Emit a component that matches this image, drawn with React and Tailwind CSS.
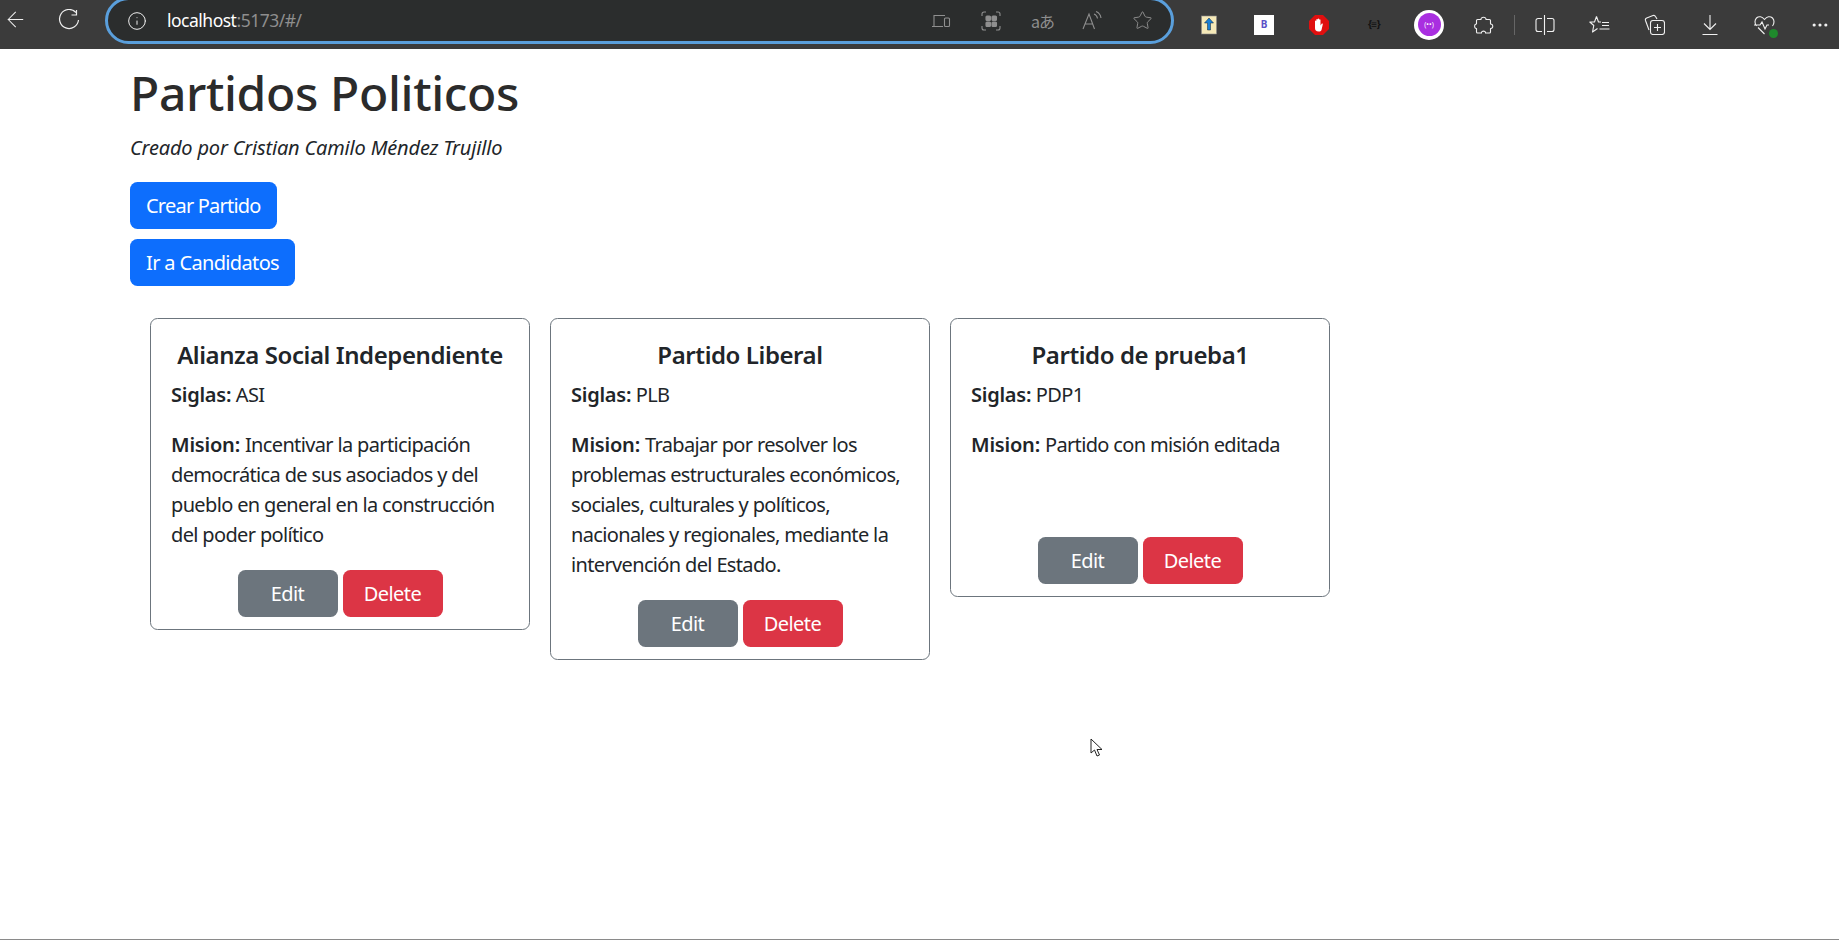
import { ArrowLeft, Info, Star, MoreHorizontal } from 'lucide-react'

const PARTIES = [
    {
        name: 'Alianza Social Independiente',
        siglas: 'ASI',
        lines: ['Incentivar la participación', 'democrática de sus asociados y del', 'pueblo en general en la construcción', 'del poder político'],
    },
    {
        name: 'Partido Liberal',
        siglas: 'PLB',
        lines: ['Trabajar por resolver los', 'problemas estructurales económicos,', 'sociales, culturales y políticos,', 'nacionales y regionales, mediante la', 'intervención del Estado.'],
    },
    {
        name: 'Partido de prueba1',
        siglas: 'PDP1',
        lines: ['Partido con misión editada'],
    },
]

function Slot({ children }) {
    return <div className="w-[55px] h-[49px] flex items-center justify-center shrink-0">{children}</div>
}

function Toolbar() {
    return (
        <div className="h-[49px] bg-[#3b3b3b] flex items-start shrink-0 overflow-hidden text-white">
            <div className="w-[30px] h-[39px] flex items-center justify-center shrink-0">
                <ArrowLeft size={25} strokeWidth={1} color="#f0f0f0" />
            </div>
            <div className="w-[30px] h-[39px] ml-[24px] flex items-center justify-center shrink-0">
                <svg width="22" height="22" viewBox="0 0 22 22" fill="none" stroke="#f0f0f0" strokeWidth="1.2">
                    <path d="M18 3.500A9.500 9.500 0 1 0 20.500 11" />
                    <path d="M18.500 1v5h-5" />
                </svg>
            </div>
            <div className="ml-[21px] w-[1069px] h-[47px] -mt-[3px] bg-[#2b2d2d] border-[3px] border-[#5a9fdc] rounded-[24px] flex items-center shrink-0">
                <div className="w-[20px] ml-[19px] flex justify-center shrink-0">
                    <Info size={20} strokeWidth={1.2} color="#eeeeee" />
                </div>
                <span className="ml-[20px] text-[17.5px] tracking-[-0.5px] text-white">
                    localhost<span className="text-[#8e8e8e]">:5173/#/</span>
                </span>
                <div className="ml-auto flex items-center gap-[30px] pr-[18px] text-[#8f8f8f]">
                    <svg width="20" height="20" viewBox="0 0 20 20" fill="none" stroke="currentColor" strokeWidth="1.1">
                        <path d="M3 15V4.500h11M1 15.500h11" />
                        <rect x="13.500" y="7" width="5" height="8.500" rx="1" />
                    </svg>
                    <svg width="20" height="20" viewBox="0 0 20 20" fill="none" stroke="currentColor" strokeWidth="1.1">
                        <path d="M1 5V3a2 2 0 0 1 2-2h2M15 1h2a2 2 0 0 1 2 2v2M19 15v2a2 2 0 0 1-2 2h-2M5 19H3a2 2 0 0 1-2-2v-2" />
                        <rect x="5" y="5" width="4.500" height="4.500" rx="1" fill="currentColor" />
                        <rect x="11" y="5" width="4.500" height="4.500" rx="1" fill="currentColor" />
                        <rect x="5" y="11" width="4.500" height="4.500" rx="1" fill="currentColor" />
                        <rect x="11" y="11" width="4.500" height="4.500" rx="1" fill="currentColor" />
                    </svg>
                    <span className="w-[21px] text-[16px] leading-none whitespace-nowrap tracking-[-1px] font-['Noto_Sans_CJK_JP',sans-serif]">aあ</span>
                    <svg width="20" height="20" viewBox="0 0 20 20" fill="none" stroke="currentColor" strokeWidth="1.1">
                        <path d="M1 18 7 3l5.500 15M3 13h8" />
                        <path d="M12 3c2 .8 3.200 2.400 3.500 4.500M14 0.500c2.600 1 4.600 3.400 5 6.500" />
                    </svg>
                    <Star size={21} strokeWidth={1.1} />
                </div>
            </div>
            <div className="ml-[7.5px] flex items-center shrink-0">
                <Slot>
                    <svg width="16" height="20" viewBox="0 0 16 20">
                        <rect x="0.500" y="1" width="15" height="18" fill="#f5e9b8" stroke="#8a8a8a" strokeWidth="0.6" />
                        <path d="M8 3 3.500 8H6.500v7h3V8h3z" fill="#1a7fd4" stroke="#123" strokeWidth="0.5" />
                    </svg>
                </Slot>
                <Slot>
                    <div className="w-5 h-5 bg-white flex items-center justify-center text-[10px] font-bold text-[#5b52c7]">B</div>
                </Slot>
                <Slot>
                    <svg width="20" height="20" viewBox="0 0 20 20">
                        <path d="M6 0h8l6 6v8l-6 6H6l-6-6V6z" fill="#e00f0f" />
                        <path d="M6 9.500V6.200c0-1 1.300-1 1.300 0V9V4.800c0-1 1.400-1 1.400 0V9V4.200c0-1 1.400-1 1.400 0V9V5c0-1 1.400-1 1.400 0v5.500l1-1.500c.7-.9 1.700-.2 1.200.7L12.500 15c-.6 1-1.300 1.500-2.800 1.500C7 16.500 6 15 6 13z" fill="#fff" />
                    </svg>
                </Slot>
                <Slot>
                    <span className="text-[10px] font-bold text-[#111111] tracking-[-0.5px]">{'{≡}'}</span>
                </Slot>
                <Slot>
                    <div className="w-[30px] h-[30px] rounded-full bg-white flex items-center justify-center">
                        <div className="w-[23px] h-[23px] rounded-full bg-[#a92fe0] flex items-center justify-center text-[7px] leading-none text-white">(••)</div>
                    </div>
                </Slot>
                <Slot>
                    <svg width="20" height="20" viewBox="0 0 20 20" fill="none" stroke="#f0f0f0" strokeWidth="1.1" strokeLinejoin="round">
                        <path d="M7 4.500C6.500 1.500 12.500 1.500 12 4.500h3.500a1 1 0 0 1 1 1V9C19.500 8.500 19.500 14 16.500 13.500V17a1 1 0 0 1-1 1H11.500C12 15.500 7 15.500 7.500 18H3.500a1 1 0 0 1-1-1V13.500C0 14 0 8.500 2.500 9V5.500a1 1 0 0 1 1-1z" />
                    </svg>
                </Slot>
                <div className="w-[1px] h-5 bg-[#666666] -ml-[0.5px] translate-x-[3px] shrink-0" />
                <div className="w-[5px] shrink-0" />
                <Slot>
                    <svg width="20" height="20" viewBox="0 0 20 20" fill="none" stroke="#f0f0f0" strokeWidth="1.1">
                        <path d="M9.500 0v20M7 3.500H3a2 2 0 0 0-2 2v9a2 2 0 0 0 2 2h4M12 3.500h5a2 2 0 0 1 2 2v9a2 2 0 0 1-2 2h-5" />
                    </svg>
                </Slot>
                <Slot>
                    <svg width="21" height="20" viewBox="0 0 21 20" fill="none" stroke="#f0f0f0" strokeWidth="1.1" strokeLinejoin="round">
                        <path d="M7.500 1.500 5.500 7H.8l4 3.500L3.500 17l5-3.500M7.500 1.500 9.500 7H12M13 7.500h7M13 10.500h7M10.500 14h10" />
                    </svg>
                </Slot>
                <Slot>
                    <svg width="21" height="21" viewBox="0 0 21 21" fill="none" stroke="#f0f0f0" strokeWidth="1.1">
                        <path d="M5 16 1.500 6.500a2 2 0 0 1 1.200-2.500L9 1.500a2 2 0 0 1 2.500 1L13 5" />
                        <rect x="6.500" y="6.500" width="14" height="14" rx="2.500" />
                        <path d="M13.500 10v7M10 13.500h7" />
                    </svg>
                </Slot>
                <Slot>
                    <svg width="16" height="20" viewBox="0 0 16 20" fill="none" stroke="#f0f0f0" strokeWidth="1.1">
                        <path d="M8 0v14.500M2 8.500l6 6 6-6M.5 19.500h15" />
                    </svg>
                </Slot>
                <Slot>
                    <div className="relative">
                        <svg width="21" height="20" viewBox="0 0 21 20" fill="none" stroke="#f0f0f0" strokeWidth="1.1">
                            <path d="M2.500 11C.5 8.500 .500 5 2.500 3c2.500-2.200 5.500-1.500 8 1.500 2.500-3 5.500-3.700 8-1.500 2 2 2 5.500 0 8M0 10h6l2-3 3 7 2-4h2" />
                            <path d="M4 12.500 10.500 19" />
                        </svg>
                        <div className="absolute right-[-3px] bottom-[-3px] w-[9px] h-[9px] rounded-full bg-[#1f8a2c]" />
                    </div>
                </Slot>
                <Slot>
                    <MoreHorizontal size={20} strokeWidth={1.8} color="#f0f0f0" />
                </Slot>
            </div>
        </div>
    )
}

function PartyCard({ party }) {
    return (
        <div className="w-[380px] border border-[#6c757d] rounded-[7.5px] px-5 pt-[18px] pb-[12px] shrink-0">
            <h3 className="text-[24px] leading-[36px] font-semibold text-center text-[#212529] tracking-[-0.42px] whitespace-nowrap">
                {party.name}
            </h3>
            <p className="mt-[7px] text-[20px] leading-[30px] text-[#212529] tracking-[-0.62px]">
                <b className="font-semibold tracking-[-0.25px]">Siglas:</b> {party.siglas}
            </p>
            <div className="mt-5 min-h-[87px] text-[20px] leading-[30px] text-[#212529] tracking-[-0.65px]">
                {party.lines.map((line, i) => (
                    <div key={line} className="whitespace-nowrap">
                        {i === 0 && <b className="font-semibold tracking-[-0.2px]">Mision: </b>}
                        {line}
                    </div>
                ))}
            </div>
            <div className="mt-5 flex justify-center gap-[5px]">
                <button className="w-[100px] h-[47px] rounded-[7.5px] bg-[#6c757d] text-white text-[20px] tracking-[-0.55px]">Edit</button>
                <button className="w-[100px] h-[47px] rounded-[7.5px] bg-[#dc3545] text-white text-[20px] tracking-[-0.55px]">Delete</button>
            </div>
        </div>
    )
}

export default function App() {
    return (
        <div className="h-[940px] flex flex-col bg-white border-b border-[#8a8a8a] overflow-hidden font-['Noto_Sans',sans-serif]">
            <Toolbar />
            <main className="relative flex-1 pl-[130px]">
                <h1 className="text-[48px] leading-[58px] font-[550] text-[#2b2b2b] tracking-[-0.36px] mt-[15px]">Partidos Politicos</h1>
                <p className="mt-[11px] text-[20px] leading-[30px] italic text-[#212529] tracking-[-0.18px]">Creado por Cristian Camilo Méndez Trujillo</p>
                <div className="mt-[19px] flex flex-col items-start gap-[10px]">
                    <button className="h-[47px] px-4 rounded-[7.5px] bg-[#0d6efd] text-white text-[20px] tracking-[-0.78px]">Crear Partido</button>
                    <button className="h-[47px] px-4 rounded-[7.5px] bg-[#0d6efd] text-white text-[20px] tracking-[-0.65px]">Ir a Candidatos</button>
                </div>
                <div className="mt-[32px] ml-5 flex items-start gap-5">
                    {PARTIES.map((party) => (
                        <PartyCard key={party.name} party={party} />
                    ))}
                </div>
                {/* cursor */}
                <svg className="absolute left-[1090px] top-[689px]" width="13" height="20" viewBox="0 0 13 20" fill="#fff" stroke="#222" strokeWidth="1">
                    <path d="M1 1v14l3.500-3 2.500 6 2.500-1-2.500-5.500H12z" />
                </svg>
            </main>
        </div>
    )
}
